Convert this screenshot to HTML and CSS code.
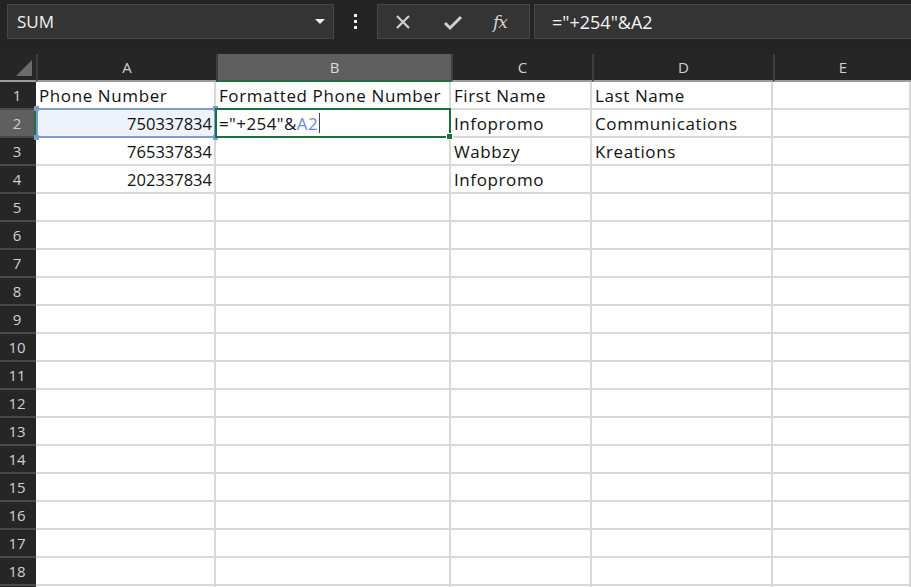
FILE: index.html
```html
<!DOCTYPE html>
<html lang="en">
<head>
  <meta charset="UTF-8" />
  <title>Sheet1</title>
  <link rel="stylesheet" href="styles.css">
</head>
<body>

<div class="formula-bar">
  <div class="name-box">
    <span>SUM</span>
    <span class="caret"></span>
  </div>
  <div class="dots"><i></i><i></i><i></i></div>
  <div class="fx-buttons">
    <svg class="ico" width="20" height="20" viewBox="0 0 20 20"><path d="M4 4 L16 16 M16 4 L4 16" stroke="#cfcfcf" stroke-width="2.2" fill="none"/></svg>
    <svg class="ico" width="22" height="20" viewBox="0 0 22 20"><path d="M3 11 L8 16 L19 5" stroke="#cfcfcf" stroke-width="3" fill="none"/></svg>
    <span class="fx">fx</span>
  </div>
  <div class="formula-input">="+254"&amp;A2</div>
</div>

<div class="sheet" id="sheet">
  <div class="corner"><span></span></div>
  <div class="col-head">A</div>
  <div class="col-head sel">B</div>
  <div class="col-head">C</div>
  <div class="col-head">D</div>
  <div class="col-head">E</div>
</div>

<script>
  const data = [
    ["Phone Number", "Formatted Phone Number", "First Name", "Last Name", ""],
    ["750337834", "", "Infopromo", "Communications", ""],
    ["765337834", "", "Wabbzy", "Kreations", ""],
    ["202337834", "", "Infopromo", "", ""]
  ];
  const sheet = document.getElementById("sheet");

  for (let r = 1; r <= 19; r++) {
    const head = document.createElement("div");
    head.className = "row-head" + (r === 2 ? " sel" : "");
    head.textContent = r < 19 ? r : "";
    sheet.appendChild(head);

    const row = data[r - 1] || ["", "", "", "", ""];
    row.forEach((val, c) => {
      const cell = document.createElement("div");
      cell.className = "cell";
      if (/^\d+$/.test(val)) cell.classList.add("num");
      cell.textContent = val;
      if (r === 2 && c === 0) cell.classList.add("ref");
      if (r === 2 && c === 1) {
        cell.classList.add("active");
        cell.innerHTML = '="+254"&amp;<span class="ref-text">A2</span><span class="cursor"></span>';
      }
      sheet.appendChild(cell);
    });
  }

  // handles on the referenced range
  const ref = sheet.querySelector(".ref");
  ["tl", "tr", "bl", "br"].forEach(p => {
    const h = document.createElement("span");
    h.className = "handle " + p;
    ref.appendChild(h);
  });
</script>

</body>
</html>
```

FILE: styles.css
```css
html, body {
  margin: 0; padding: 0; height: 100%;
  background: #242424; overflow: hidden;
  font-family: "Open Sans", "Noto Sans", sans-serif;
}

.formula-bar {
  height: 54px; box-sizing: border-box;
  padding: 4px 0 15px 7px;
  display: flex; align-items: stretch;
}

.name-box {
  width: 327px; box-sizing: border-box;
  background: #343434; border: 1px solid #474747;
  display: flex; align-items: center; justify-content: space-between;
  padding: 0 8px 0 9px;
  color: #f2f2f2; font-size: 17px;
}
.caret {
  width: 0; height: 0; margin-right: 0;
  border-left: 5px solid transparent; border-right: 5px solid transparent;
  border-top: 5px solid #f2f2f2;
}

.dots {
  width: 43px; display: flex; flex-direction: column;
  align-items: center; justify-content: center; gap: 3px;
}
.dots i { width: 3px; height: 3px; background: #f0f0f0; display: block; }

.fx-buttons {
  width: 153px; box-sizing: border-box;
  background: #343434; border: 1px solid #474747;
  display: flex; align-items: center; gap: 29px;
  padding: 0 0 0 15px;
}
.fx {
  font-family: "DejaVu Serif", "Liberation Serif", serif;
  font-style: italic; font-size: 17px; color: #d6d6d6; letter-spacing: -1px;
}

.formula-input {
  flex: 1; margin-left: 4px;
  background: #343434; border: 1px solid #474747; border-right: none;
  display: flex; align-items: center; padding-left: 17px;
  color: #f5f5f5; font-size: 18px;
}

.sheet {
  display: grid;
  grid-template-columns: 36px 180px 235px 141px 181px 1fr;
  grid-auto-rows: 28px;
}

.corner {
  background: #262626; border-bottom: 2px solid #9c9c9c;
  position: relative;
}
.corner span {
  position: absolute; right: 4px; bottom: 4px;
  width: 0; height: 0;
  border-left: 16px solid transparent; border-bottom: 16px solid #6b6b6b;
}

.col-head {
  background: #262626; color: #d0d0d0; font-size: 15px;
  display: flex; align-items: center; justify-content: center;
  border-bottom: 2px solid #9c9c9c; border-left: 2px solid #3e3e3e;
}
.col-head.sel {
  background: #5f5f5f; border-bottom-color: #1d6f42; color: #dcdcdc;
}

.row-head {
  background: #262626; color: #d0d0d0; font-size: 15px;
  display: flex; align-items: center; justify-content: center;
  border-bottom: 2px solid #4a4a4a; box-sizing: border-box;
  padding-right: 2px;
}
.row-head.sel {
  background: #5f5f5f; border-right: 2px solid #1d6f42; padding-right: 0;
}

.cell {
  background: #fff; color: #111; font-size: 17px; letter-spacing: 0.6px;
  box-sizing: border-box; border-right: 2px solid #d8d8d8; border-bottom: 2px solid #d8d8d8;
  padding: 0 3px; white-space: nowrap;
  display: flex; align-items: center;
  position: relative;
}
.cell.num { justify-content: flex-end; padding-right: 2px; letter-spacing: 0; font-size: 16.5px; }

.cell.ref { background: #eef3fb; }
.cell.ref::after {
  content: ""; position: absolute;
  left: 0; top: -2px; right: -2px; bottom: -2px;
  border: 2px solid #7d9bd1;
}
.handle {
  position: absolute; width: 5px; height: 5px; background: #7d9bd1; z-index: 2;
}
.handle.tl { left: -2px; top: -4px; }
.handle.tr { right: -4px; top: -4px; }
.handle.bl { left: -2px; bottom: -4px; }
.handle.br { right: -4px; bottom: -4px; }

.cell.active { z-index: 3; letter-spacing: 0.4px; }
.cell.active::after {
  content: ""; position: absolute;
  left: -1px; top: -2px; right: -2px; bottom: -2px;
  border: 2px solid #1d6f42;
}
.cell.active::before {
  content: ""; position: absolute; z-index: 4;
  right: -4px; bottom: -4px; width: 5px; height: 5px;
  background: #1d6f42; border: 1px solid #fff;
}
.ref-text { color: #7088d4; }
.cursor { display: inline-block; width: 1px; height: 20px; background: #444; margin-left: 1px; }
```
